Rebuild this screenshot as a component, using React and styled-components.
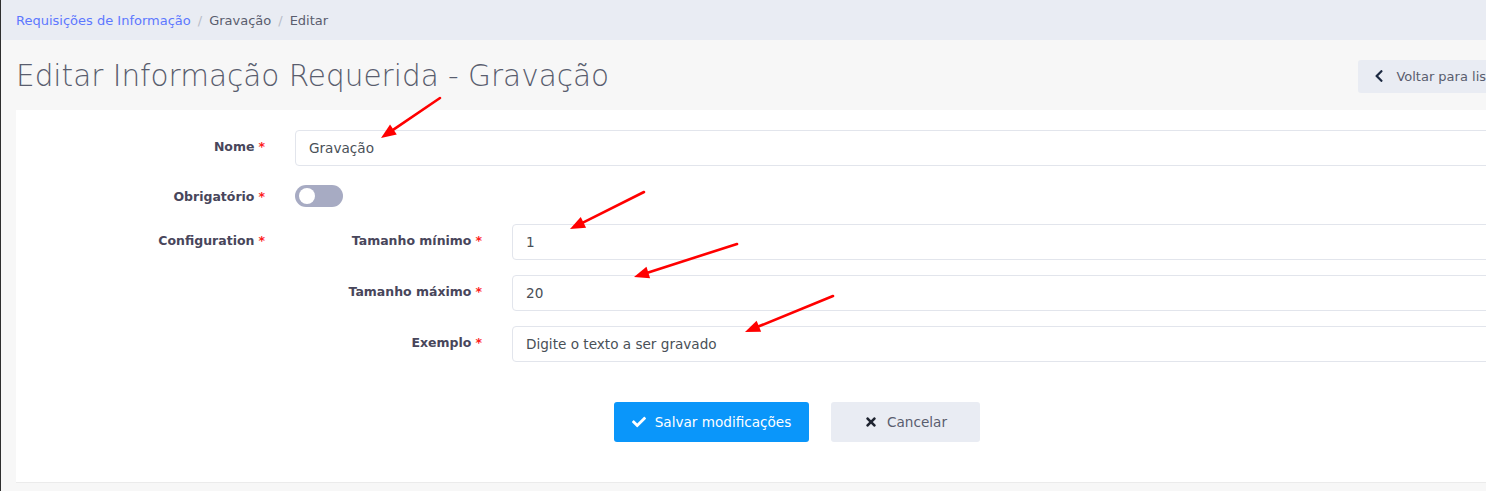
import React from "react";
import styled, { createGlobalStyle } from "styled-components";
import { FaCheck, FaTimes, FaChevronLeft } from "react-icons/fa";

const GlobalStyle = createGlobalStyle`
  html, body { margin: 0; padding: 0; background: #f7f7f7; overflow: hidden; }
  body { font-family: "DejaVu Sans", "Liberation Sans", sans-serif; color: #595d6e; }
  * { box-sizing: border-box; }
`;

const Page = styled.div`
  position: relative;
  width: 1594px;
  min-height: 491px;
  border-left: 1px solid #2e2e2e;
  background: #f7f7f7;
`;

const Breadcrumb = styled.nav`
  display: flex;
  align-items: center;
  height: 40px;
  padding-left: 15px;
  background: #e9ecf3;
  font-size: 13px;
`;

const Crumb = styled.a`
  color: ${(p) => (p.$link ? "#5d78ff" : "#595d6e")};
  text-decoration: none;
`;

const Sep = styled.span`
  color: #b8bcc8;
  padding: 0 7px;
`;

const Header = styled.header`
  display: flex;
  justify-content: space-between;
  align-items: center;
  height: 70px;
  padding: 2px 50px 0 15px;
`;

const Title = styled.h1`
  margin: 0;
  font-size: 29.5px;
  font-weight: 300;
  color: #595d6e;
`;

const BackButton = styled.button`
  display: flex;
  align-items: center;
  gap: 10px;
  height: 33px;
  padding: 0 16px 0 14px;
  border: none;
  border-radius: 3px;
  background: #e9ecf3;
  color: #595d6e;
  font: inherit;
  font-size: 13px;
  white-space: nowrap;
  svg { color: #1d2a42; font-size: 14px; }
`;

const Card = styled.section`
  margin: 0 16px 0 15px;
  background: #fff;
  border-bottom: 1px solid #ebebeb;
  padding: 20px 0 40px;
`;

const FormRow = styled.div`
  display: grid;
  grid-template-columns: ${(p) => p.$label}px 1fr;
  column-gap: 30px;
  align-items: ${(p) => (p.$top ? "start" : "center")};
  margin-bottom: ${(p) => p.$mb || 0}px;
  padding-right: ${(p) => p.$pr || 0}px;
`;

const Label = styled.label`
  display: flex;
  align-items: center;
  justify-content: flex-end;
  min-height: ${(p) => (p.$tall ? 36 : 0)}px;
  padding-bottom: ${(p) => (p.$flat ? 0 : 4)}px;
  font-size: 12.5px;
  font-weight: 700;
  color: #48465b;
  white-space: nowrap;
`;

const Req = styled.span`
  color: #fd1d1d;
  margin-left: 4px;
`;

const Input = styled.input`
  width: 100%;
  height: 36px;
  padding: 0 13px;
  border: 1px solid #e2e5ec;
  border-radius: 4px;
  background: #fff;
  color: #495057;
  font: inherit;
  font-size: 13.6px;
  outline: none;
`;

const Toggle = styled.span`
  position: relative;
  display: block;
  width: 48px;
  height: 22px;
  border-radius: 11px;
  background: #a7abc3;
  &::after {
    content: "";
    position: absolute;
    top: 3px;
    left: 4px;
    width: 16px;
    height: 16px;
    border-radius: 50%;
    background: #fff;
  }
`;

const SubForm = styled.div`
  display: flex;
  flex-direction: column;
  gap: 15px;
`;

const Actions = styled.div`
  display: flex;
  justify-content: center;
  gap: 22px;
  margin-top: 40px;
`;

const Button = styled.button`
  display: flex;
  align-items: center;
  justify-content: center;
  gap: 9px;
  width: ${(p) => p.$w}px;
  height: 40px;
  border: none;
  border-radius: 3px;
  background: ${(p) => (p.$primary ? "#0a96fa" : "#e9ecf3")};
  color: ${(p) => (p.$primary ? "#fff" : "#595d6e")};
  font: inherit;
  font-size: 13.6px;
  svg { color: ${(p) => (p.$primary ? "#fff" : "#1f2430")}; font-size: 14px; }
`;

const Arrows = styled.svg`
  position: absolute;
  left: 0;
  top: 0;
  width: 1486px;
  height: 491px;
  pointer-events: none;
`;

const arrows = [
  [439, 98, 380, 138],
  [643, 192, 569, 229],
  [736, 244, 633, 277],
  [832, 296, 744, 332],
];

function Arrow({ x1, y1, x2, y2 }) {
  const a = Math.atan2(y2 - y1, x2 - x1);
  const L = 15, W = 6;
  const bx = x2 - L * Math.cos(a), by = y2 - L * Math.sin(a);
  const px = -Math.sin(a) * W, py = Math.cos(a) * W;
  return (
    <g>
      <line x1={x1} y1={y1} x2={bx} y2={by} stroke="#f00" strokeWidth="2.6" strokeLinecap="round" />
      <polygon points={`${x2},${y2} ${bx + px},${by + py} ${bx - px},${by - py}`} fill="#f00" />
    </g>
  );
}

export default function App() {
  return (
    <>
      <GlobalStyle />
      <Page>
        <Breadcrumb>
          <Crumb $link href="#">Requisições de Informação</Crumb>
          <Sep>/</Sep>
          <Crumb>Gravação</Crumb>
          <Sep>/</Sep>
          <Crumb>Editar</Crumb>
        </Breadcrumb>
        <Header>
          <Title>Editar Informação Requerida - Gravação</Title>
          <BackButton>
            <FaChevronLeft />
            Voltar para listagem
          </BackButton>
        </Header>
        <Card>
          <FormRow $label={249} $mb={19} $pr={18}>
            <Label>Nome<Req>*</Req></Label>
            <Input defaultValue="Gravação" />
          </FormRow>
          <FormRow $label={249} $mb={17} $pr={18}>
            <Label $flat>Obrigatório<Req>*</Req></Label>
            <Toggle />
          </FormRow>
          <FormRow $label={249} $top $pr={18}>
            <Label $tall>Configuration<Req>*</Req></Label>
            <SubForm>
              <FormRow $label={187}>
                <Label>Tamanho mínimo<Req>*</Req></Label>
                <Input defaultValue="1" />
              </FormRow>
              <FormRow $label={187}>
                <Label>Tamanho máximo<Req>*</Req></Label>
                <Input defaultValue="20" />
              </FormRow>
              <FormRow $label={187}>
                <Label>Exemplo<Req>*</Req></Label>
                <Input defaultValue="Digite o texto a ser gravado" />
              </FormRow>
            </SubForm>
          </FormRow>
          <Actions>
            <Button $primary $w={195}><FaCheck />Salvar modificações</Button>
            <Button $w={149}><FaTimes />Cancelar</Button>
          </Actions>
        </Card>
        <Arrows viewBox="0 0 1486 491">
          {arrows.map(([x1, y1, x2, y2], i) => (
            <Arrow key={i} x1={x1} y1={y1} x2={x2} y2={y2} />
          ))}
        </Arrows>
      </Page>
    </>
  );
}
